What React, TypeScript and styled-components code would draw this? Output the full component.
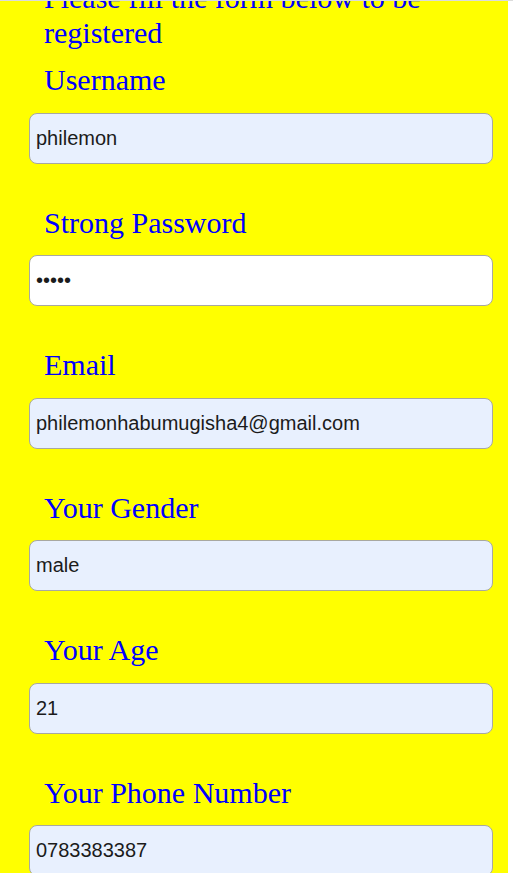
import React, { FunctionComponent } from 'react';
import styled, { createGlobalStyle } from 'styled-components';

interface Field {
  label: string;
  type: string;
  value: string;
  autofilled: boolean;
}

const fields: Field[] = [
  { label: 'Username', type: 'text', value: 'philemon', autofilled: true },
  { label: 'Strong Password', type: 'password', value: '12345', autofilled: false },
  { label: 'Email', type: 'email', value: 'philemonhabumugisha4@gmail.com', autofilled: true },
  { label: 'Your Gender', type: 'text', value: 'male', autofilled: true },
  { label: 'Your Age', type: 'text', value: '21', autofilled: true },
  { label: 'Your Phone Number', type: 'tel', value: '0783383387', autofilled: true },
];

const App: FunctionComponent = () => {
  return (
    <Viewport>
      <GlobalStyle />
      <Page>
        <Heading>Please fill the form below to be registered</Heading>
        <form onSubmit={(e) => e.preventDefault()}>
          {fields.map((f) => (
            <FieldRow key={f.label}>
              <Label>{f.label}</Label>
              <Input
                type={f.type}
                defaultValue={f.value}
                $autofilled={f.autofilled}
                readOnly
              />
            </FieldRow>
          ))}
        </form>
      </Page>
    </Viewport>
  );
};

const GlobalStyle = createGlobalStyle`
  html, body {
    margin: 0;
    padding: 0;
    background: #ffffff;
  }
`;

const Viewport = styled.div`
  height: 872px;
  overflow: hidden;
  border-top: 1px solid #dcdcdc;
  background: #ffffff;
`;

const Page = styled.div`
  width: 508px;
  min-height: 900px;
  margin-top: -20px;
  background: #ffff00;
  font-family: 'Liberation Serif', 'Times New Roman', serif;
  color: #0000ff;
`;

const Heading = styled.h3`
  margin: 0 0 13px;
  padding-left: 44px;
  padding-right: 40px;
  font-size: 30px;
  font-weight: normal;
  line-height: 34.5px;
`;

const FieldRow = styled.div`
  display: flex;
  flex-direction: column;
  margin-bottom: 42px;
`;

const Label = styled.label`
  display: block;
  padding-left: 44px;
  margin-bottom: 15px;
  font-size: 30px;
  line-height: 34.5px;
`;

const Input = styled.input<{ $autofilled: boolean }>`
  box-sizing: border-box;
  width: 464px;
  height: 51px;
  margin-left: 29px;
  padding: 0 6px;
  border: 1px solid #a8a8a0;
  border-radius: 8px;
  background: ${(p) => (p.$autofilled ? '#e8f0fe' : '#ffffff')};
  font-family: 'Liberation Sans', Arial, sans-serif;
  font-size: 20px;
  color: #1b1b1b;
  outline: none;
`;

export default App;
